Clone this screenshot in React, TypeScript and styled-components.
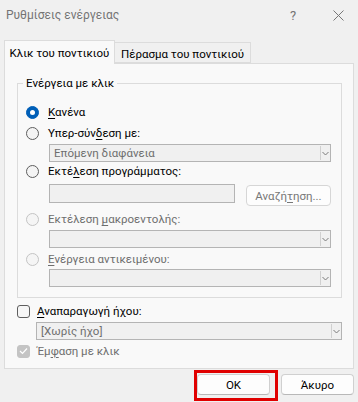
import React from "react";
import styled, { createGlobalStyle } from "styled-components";

const Global = createGlobalStyle`
    html, body{
        margin: 0;
        padding: 0;
        background: #f0f0f0;
    }
    body{
        font-family: Roboto, "Noto Sans", sans-serif;
        font-size: 11.5px;
        color: #000;
    }
`;

const Dialog = styled.div`
    width: 358px;
    height: 402px;
    background: #f0f0f0;
    display: flex;
    flex-direction: column;
    overflow: hidden;
`;

const TitleBar = styled.div`
    height: 30px;
    display: flex;
    align-items: center;
    padding: 0 5px 2px 6px;
    color: #747474;
    font-size: 12px;
    .title{
        flex: 1;
    }
    .help{
        width: 20px;
        text-align: center;
        margin-right: 20px;
        font-size: 13px;
    }
    .close{
        width: 30px;
        display: flex;
        justify-content: center;
        svg{ display: block; }
    }
`;

const TabRow = styled.div`
    display: flex;
    align-items: flex-end;
    padding: 8px 0 0 4px;
    height: 23px;
    position: relative;
    z-index: 1;
`;

const Tab = styled.div<{ $active?: boolean; $w: number }>`
    width: ${p => p.$w}px;
    height: ${p => p.$active ? "24px" : "21px"};
    box-sizing: border-box;
    display: flex;
    align-items: center;
    justify-content: center;
    border: 1px solid #dcdcdc;
    border-bottom: ${p => p.$active ? "none" : "1px solid #dcdcdc"};
    border-left: ${p => p.$active ? "1px solid #dcdcdc" : "none"};
    background: ${p => p.$active ? "#f9f9f9" : "#f0f0f0"};
    margin-bottom: ${p => p.$active ? "-1px" : "0"};
    padding-top: ${p => p.$active ? "0" : "2px"};
`;

const Panel = styled.div`
    margin: 0 4px;
    height: 306px;
    box-sizing: border-box;
    border: 1px solid #dcdcdc;
    background: #f9f9f9;
    padding: 12px 11px 0 12px;
`;

const Group = styled.fieldset`
    margin: 0;
    padding: 13px 10px 10px 8px;
    border: 1px solid #dcdcdc;
    legend{
        margin-left: -3px;
        padding: 0 3px;
        line-height: 14px;
    }
`;

const Option = styled.label<{ $disabled?: boolean; $top?: number }>`
    display: flex;
    align-items: center;
    gap: 9px;
    height: 18px;
    margin-top: ${p => p.$top ?? 0}px;
    color: ${p => p.$disabled ? "#6e6e6e" : "#000"};
`;

const CheckOption = styled(Option)`
    gap: 7px;
`;

const Radio = styled.span<{ $checked?: boolean; $disabled?: boolean }>`
    width: 13px;
    height: 13px;
    box-sizing: border-box;
    border-radius: 50%;
    border: 1px solid ${p => p.$checked ? "#005fb8" : p.$disabled ? "#c4c4c4" : "#5e5e5e"};
    background: ${p => p.$checked ? "#005fb8" : p.$disabled ? "#f5f5f5" : "#f4f4f4"};
    display: flex;
    align-items: center;
    justify-content: center;
    &::after{
        content: "";
        display: ${p => p.$checked ? "block" : "none"};
        width: 5px;
        height: 5px;
        border-radius: 50%;
        background: #fff;
    }
`;

const Check = styled.span<{ $disabled?: boolean }>`
    width: 13px;
    height: 13px;
    box-sizing: border-box;
    border-radius: 3px;
    border: 1px solid ${p => p.$disabled ? "#c4c4c4" : "#5e5e5e"};
    background: ${p => p.$disabled ? "#c4c4c4" : "#f6f6f6"};
    display: flex;
    align-items: center;
    justify-content: center;
    svg{ display: block; }
`;

const Indent = styled.div<{ $top?: number; $left?: number }>`
    display: flex;
    gap: 11px;
    padding-left: ${p => p.$left ?? 23}px;
    margin-top: ${p => p.$top ?? 2}px;
    align-items: flex-start;
`;

const Combo = styled.div`
    flex: 1;
    height: 18px;
    box-sizing: border-box;
    border: 1px solid #b4b4b4;
    background: #f0f0f0;
    display: flex;
    align-items: center;
    color: #6e6e6e;
    .value{
        flex: 1;
        padding-left: 4px;
        white-space: nowrap;
    }
    .arrow{
        width: 9px;
        height: 14px;
        border-left: 1px solid #d0d0d0;
        display: flex;
        align-items: center;
        justify-content: center;
    }
`;

const TextBox = styled.div`
    width: 186px;
    height: 19px;
    box-sizing: border-box;
    border: 1px solid #b4b4b4;
    background: #f0f0f0;
`;

const Button = styled.div<{ $disabled?: boolean; $w?: number }>`
    width: ${p => p.$w ?? 73}px;
    height: 21px;
    box-sizing: border-box;
    border: 1px solid ${p => p.$disabled ? "#d6d6d6" : "#d0d0d0"};
    border-bottom-color: ${p => p.$disabled ? "#d6d6d6" : "#b8b8b8"};
    border-radius: 4px;
    background: #fdfdfd;
    color: ${p => p.$disabled ? "#777" : "#000"};
    display: flex;
    align-items: center;
    justify-content: center;
    margin-top: 1px;
`;

const Sound = styled.div`
    display: flex;
    flex-direction: column;
    padding-top: 4px;
`;

const Footer = styled.div`
    flex: 1;
    display: flex;
    justify-content: flex-end;
    align-items: flex-start;
    padding: 1px 4px 0 0;
    gap: 3px;
`;

const Focus = styled.div`
    border: 3px solid #e00000;
    padding: 0 5px 3px 0;
    display: flex;
`;

const CancelWrap = styled.div`
    padding-top: 3px;
`;

const U = styled.span`
    text-decoration: underline;
    text-underline-offset: 2px;
`;

const Chevron = () => (
    <svg width="7" height="5" viewBox="0 0 7 5"><path d="M0.5 1 L3.5 4 L6.5 1" fill="none" stroke="#7a7a7a" strokeWidth="1"/></svg>
);

const Tick = () => (
    <svg width="9" height="8" viewBox="0 0 9 8"><path d="M1 4 L3.5 6.5 L8 1.5" fill="none" stroke="#fff" strokeWidth="1.2"/></svg>
);

const ComboBox = ({ value }: { value?: string }) => (
    <Combo>
        <span className="value">{value}</span>
        <span className="arrow"><Chevron /></span>
    </Combo>
);

export default function App(){
    return(
        <Dialog>
            <Global />
            <TitleBar>
                <span className="title">Ρυθμίσεις ενέργειας</span>
                <span className="help">?</span>
                <span className="close">
                    <svg width="11" height="11" viewBox="0 0 11 11"><path d="M0.5 0.5 L10.5 10.5 M10.5 0.5 L0.5 10.5" stroke="#777" strokeWidth="1"/></svg>
                </span>
            </TitleBar>
            <TabRow>
                <Tab $active $w={111}>Κλικ του ποντικιού</Tab>
                <Tab $w={136}>Πέρασμα του ποντικιού</Tab>
            </TabRow>
            <Panel>
                <Group>
                    <legend>Ενέργεια με κλικ</legend>
                    <Option><Radio $checked /><span><U>Κ</U>ανένα</span></Option>
                    <Option $top={3}><Radio /><span>Υπερ-σύν<U>δ</U>εση με:</span></Option>
                    <Indent><ComboBox value="Επόμενη διαφάνεια" /></Indent>
                    <Option><Radio /><span>Εκτέ<U>λ</U>εση προγράμματος:</span></Option>
                    <Indent $top={4}>
                        <TextBox />
                        <Button $disabled $w={85}>Αναζή<U>τ</U>ηση...</Button>
                    </Indent>
                    <Option $disabled $top={4}><Radio $disabled /><span>Εκτέλεση <U>μ</U>ακροεντολής:</span></Option>
                    <Indent><ComboBox /></Indent>
                    <Option $disabled $top={2}><Radio $disabled /><span><U>Ε</U>νέργεια αντικειμένου:</span></Option>
                    <Indent $top={1}><ComboBox /></Indent>
                </Group>
                <Sound>
                    <CheckOption><Check /><span><U>Α</U>ναπαραγωγή ήχου:</span></CheckOption>
                    <Indent $left={19} $top={2}><ComboBox value="[Χωρίς ήχο]" /></Indent>
                    <CheckOption $disabled $top={2}><Check $disabled><Tick /></Check><span>Έμ<U>φ</U>αση με κλικ</span></CheckOption>
                </Sound>
            </Panel>
            <Footer>
                <Focus><Button>OK</Button></Focus>
                <CancelWrap><Button>Άκυρο</Button></CancelWrap>
            </Footer>
        </Dialog>
    );
}
